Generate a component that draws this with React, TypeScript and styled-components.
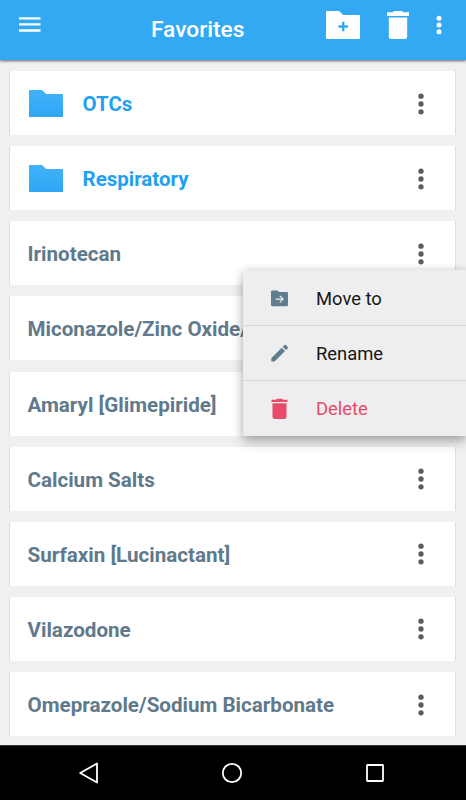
import React from "react";
import styled, { createGlobalStyle } from "styled-components";

const GlobalStyle = createGlobalStyle`
  * { box-sizing: border-box; }
  body { margin: 0; background: #efefef; font-family: Roboto, sans-serif; }
`;

const Screen = styled.div`
  position: relative;
  width: 466px;
  height: 800px;
  display: flex;
  flex-direction: column;
  overflow: hidden;
  background: #f0f0f0;
`;

const Toolbar = styled.header`
  position: relative;
  z-index: 1;
  flex: none;
  height: 60px;
  display: flex;
  align-items: flex-start;
  padding: 0 24px 0 19px;
  background: #33a9f4;
  color: #fff;
  box-shadow: 0 1px 2px rgba(0, 0, 0, 0.45), 0 2px 3px rgba(0, 0, 0, 0.12);
`;

const Title = styled.h1`
  flex: 1;
  margin: 17px 0 0 110px;
  font-size: 22.7px;
  line-height: 26px;
  font-weight: 500;
`;

const BarButton = styled.button<{ $top: number; $gap?: number }>`
  flex: none;
  display: flex;
  margin: ${(p) => p.$top}px 0 0 ${(p) => p.$gap ?? 0}px;
  padding: 0;
  border: 0;
  background: none;
  color: inherit;
`;

const List = styled.main`
  flex: 1;
  min-height: 0;
  display: flex;
  flex-direction: column;
  gap: 11.15px;
  padding: 11px 11px 0 9.5px;
`;

const Card = styled.article`
  flex: none;
  height: 64px;
  display: flex;
  align-items: center;
  padding: 1px 30px 0 18px;
  background: #fff;
  box-shadow: -1px 0 0 #dedede, 1px 0 0 #dedede;
`;

const FolderSlot = styled.span`
  display: flex;
  width: 55px;
  padding-left: 1.5px;
`;

const Name = styled.span<{ $folder?: boolean }>`
  flex: 1;
  padding-top: 1px;
  font-size: ${(p) => (p.$folder ? 20.5 : 20.6)}px;
  line-height: 24px;
  font-weight: 700;
  white-space: nowrap;
  color: ${(p) => (p.$folder ? "#1fa0f0" : "#607a8c")};
`;

const Menu = styled.div`
  position: absolute;
  z-index: 2;
  top: 270px;
  left: 243px;
  width: 223px;
  background: #eee;
  border-radius: 2px 0 0 2px;
  box-shadow: 0 6px 12px rgba(0, 0, 0, 0.25), 0 0 8px rgba(0, 0, 0, 0.14);
`;

const MenuItem = styled.div<{ $danger?: boolean }>`
  height: 55.2px;
  display: flex;
  align-items: center;
  padding: 2px 0 0 26px;
  font-size: 18.4px;
  line-height: 24px;
  color: ${(p) => (p.$danger ? "#e84b6a" : "#161616")};
  & + & { border-top: 1px solid #d8d8d8; }
`;

const MenuIcon = styled.span`
  display: flex;
  width: 47px;
`;

const NavBar = styled.nav`
  flex: none;
  height: 55px;
  display: flex;
  align-items: center;
  justify-content: space-between;
  padding: 0 81px 0 79px;
  background: #000;
  border-top: 1px solid #333;
`;

const FolderPath = "M1 0h12l4.2 4H33a1 1 0 0 1 1 1v22a1 1 0 0 1-1 1H1a1 1 0 0 1-1-1V1a1 1 0 0 1 1-1z";

const Folder = () => (
  <svg width="34" height="27.5" viewBox="0 0 34 28" preserveAspectRatio="none">
    <defs>
      <linearGradient id="folderFill" x1="0" y1="0" x2="0" y2="1">
        <stop offset="0" stopColor="#42b2fa" />
        <stop offset="1" stopColor="#2ea7f4" />
      </linearGradient>
    </defs>
    <path fill="url(#folderFill)" d={FolderPath} />
  </svg>
);

const FolderAdd = () => (
  <svg width="34" height="28" viewBox="0 0 34 28">
    <path fill="#fff" d={FolderPath} />
    <path stroke="#33a9f4" strokeWidth="2.4" d="M12.5 15.5h9.4M17.2 10.8v9.4" />
  </svg>
);

const Trash = () => (
  <svg width="22" height="28" viewBox="0 0 22 28" fill="currentColor">
    <path d="M0 1.3h5.6L7 0h8l1.4 1.3H22V5H0zM1.8 6.5h18.4v19.2q0 2.3-2.3 2.3H4.1q-2.3 0-2.3-2.3z" />
  </svg>
);

const SmallTrash = () => (
  <svg width="22" height="22" viewBox="0 0 22 22" fill="currentColor">
    <path d="M2.5 1.8h4.4L8.1.8h4.8l1.2 1h4.4V4h-16zM3.5 5.2h14v13.5q0 2.4-2.4 2.4H5.9q-2.4 0-2.4-2.4z" />
  </svg>
);

const CardDots = () => (
  <svg width="8" height="22" viewBox="0 0 8 22" fill="#5c5c5c">
    <circle cx="4" cy="3.2" r="2.65" />
    <circle cx="4" cy="11" r="2.65" />
    <circle cx="4" cy="18.8" r="2.65" />
  </svg>
);

const BarDots = () => (
  <svg width="6" height="20" viewBox="0 0 6 20" fill="#fff">
    <circle cx="3" cy="3.2" r="2.5" />
    <circle cx="3" cy="10" r="2.5" />
    <circle cx="3" cy="16.8" r="2.5" />
  </svg>
);

const MoveIcon = () => (
  <svg width="22" height="22" viewBox="0 0 22 22">
    <path fill="#607d8f" d="M3.2 2.5h5.2l1.8 1.5h7.7q1.1 0 1.1 1.1v12q0 1.1-1.1 1.1H3.1q-1.1 0-1.1-1.1V3.6Q2 2.5 3.2 2.5z" />
    <path fill="none" stroke="#eee" strokeWidth="1.2" d="M6.8 11.1h7M10.8 7.8l3.3 3.3-3.3 3.3" />
  </svg>
);

const PencilIcon = () => (
  <svg width="22" height="22" viewBox="0 0 22 22" fill="#607d8f">
    <path d="M2.3 15.2 12.7 4.8l3.3 3.3L5.6 18.5H2.3zM13.7 3.8l1.7-1.7q.7-.7 1.4 0l1.9 1.9q.7.7 0 1.4l-1.7 1.7z" />
  </svg>
);

const entries = [
  { name: "OTCs", folder: true },
  { name: "Respiratory", folder: true },
  { name: "Irinotecan" },
  { name: "Miconazole/Zinc Oxide/" },
  { name: "Amaryl [Glimepiride]" },
  { name: "Calcium Salts" },
  { name: "Surfaxin [Lucinactant]" },
  { name: "Vilazodone" },
  { name: "Omeprazole/Sodium Bicarbonate" },
];

export default function App() {
  return (
    <>
      <GlobalStyle />
      <Screen>
        <Toolbar>
          <BarButton $top={16} aria-label="Open navigation">
            <svg width="22" height="17" viewBox="0 0 22 17" stroke="#fff" strokeWidth="2.3">
              <path d="M0 2.3h21.5M0 8.4h21.5M0 14.5h21.5" />
            </svg>
          </BarButton>
          <Title>Favorites</Title>
          <BarButton $top={11} aria-label="New folder"><FolderAdd /></BarButton>
          <BarButton $top={11} $gap={27} aria-label="Delete"><Trash /></BarButton>
          <BarButton $top={15} $gap={27} aria-label="More options"><BarDots /></BarButton>
        </Toolbar>
        <List>
          {entries.map((entry) => (
            <Card key={entry.name}>
              {entry.folder && <FolderSlot><Folder /></FolderSlot>}
              <Name $folder={entry.folder}>{entry.name}</Name>
              <CardDots />
            </Card>
          ))}
        </List>
        <Menu>
          <MenuItem><MenuIcon><MoveIcon /></MenuIcon>Move to</MenuItem>
          <MenuItem><MenuIcon><PencilIcon /></MenuIcon>Rename</MenuItem>
          <MenuItem $danger><MenuIcon><SmallTrash /></MenuIcon>Delete</MenuItem>
        </Menu>
        <NavBar>
          <svg width="20" height="22" viewBox="0 0 20 22" fill="none" stroke="#fff" strokeWidth="1.8" strokeLinejoin="round">
            <path d="M1.2 11 18 1.5v19z" />
          </svg>
          <svg width="22" height="22" viewBox="0 0 22 22" fill="none" stroke="#fff" strokeWidth="1.8">
            <circle cx="11" cy="11" r="9.2" />
          </svg>
          <svg width="20" height="20" viewBox="0 0 20 20" fill="none" stroke="#fff" strokeWidth="1.8">
            <rect x="2" y="2" width="16" height="16" rx=".4" />
          </svg>
        </NavBar>
      </Screen>
    </>
  );
}
